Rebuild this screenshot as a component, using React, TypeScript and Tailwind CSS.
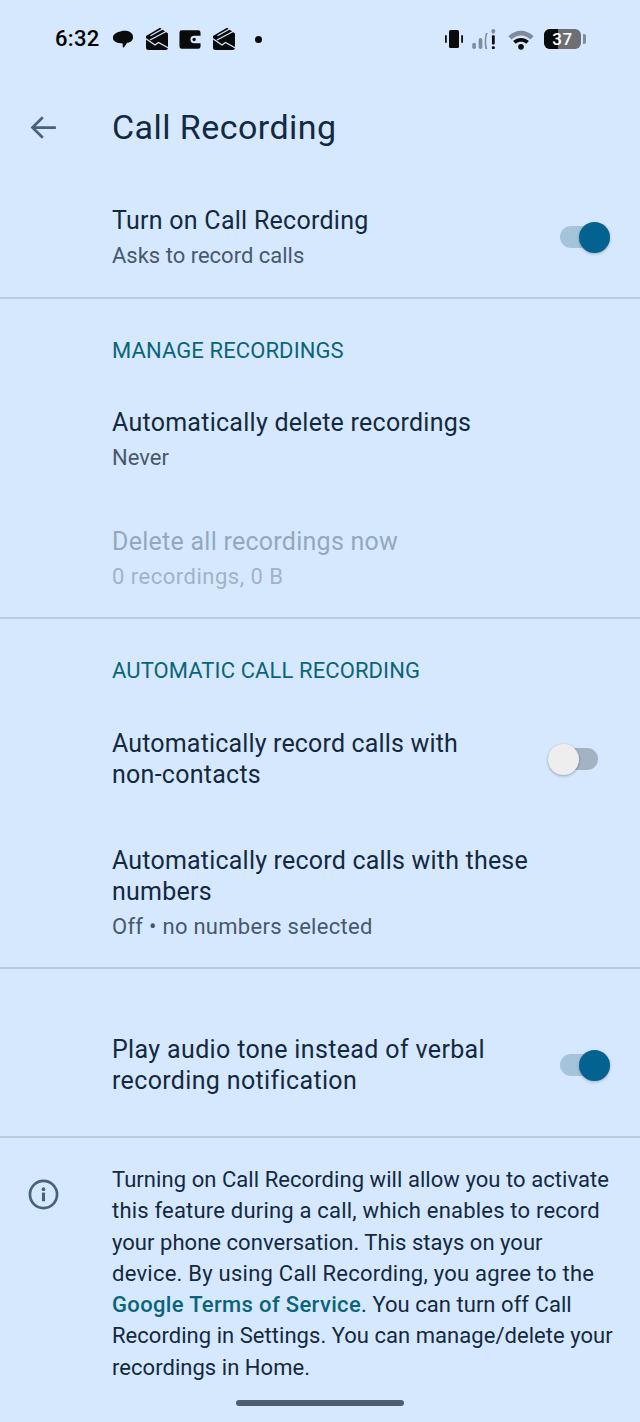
import React from "react";

const F = "font-['Roboto',sans-serif]";

function Folder({ className = "" }: { className?: string }) {
  return (
    <svg viewBox="0 0 24 24" className={className} fill="#0b0b0c">
      <path d="M1 9 15 .8 23 6.500V20.500a2.500 2.500 0 0 1-2.500 2.500h-17A2.500 2.500 0 0 1 1 20.500z" />
      <path d="M5.500 8.800 18.500 1.500M5 13 23 3.500M.5 11.500l9.500 6.500 3.500-2.500 10 5.500" stroke="#d6e8fe" strokeWidth="1.300" fill="none" />
    </svg>
  );
}

function Switch({ on }: { on: boolean }) {
  if (on) {
    return (
      <div className="relative w-[50px] h-[22px] rounded-full bg-[#a5c4dc] shrink-0">
        <div className="absolute right-0 top-[-4px] w-[31px] h-[31px] rounded-full bg-[#03628f] shadow-[0_1px_3px_rgba(0,0,0,0.25)]" />
      </div>
    );
  }
  return (
    <div className="relative w-[50px] h-[22px] rounded-full bg-[#a3b3c2] shrink-0">
      <div className="absolute left-0 top-[-4px] w-[31px] h-[31px] rounded-full bg-[#eeeeee] shadow-[0_1px_3px_rgba(0,0,0,0.3)]" />
    </div>
  );
}

function Row({ title, sub, subClass = "", disabled, className = "", children }: { title: React.ReactNode; sub?: string; subClass?: string; disabled?: boolean; className?: string; children?: React.ReactNode }) {
  return (
    <div className={`flex items-center pl-[112px] ${className}`}>
      <div className="flex-1 min-w-0">
        <div className={`text-[25px] leading-[31px] tracking-[0.26px] ${disabled ? "text-[#93a8bd]" : "text-[#13293f]"}`}>{title}</div>
        {sub && <div className={`text-[22px] leading-[28px] mt-[6px] ${subClass} ${disabled ? "text-[#a0b3c7]" : "text-[#46596d]"}`}>{sub}</div>}
      </div>
      {children}
    </div>
  );
}

const Divider = () => <div className="h-[2px] bg-[#bccbdb] shrink-0" />;

const Section = ({ children }: { children: React.ReactNode }) => (
  <div className="pl-[112px] text-[22px] leading-[28px] tracking-[0.1px] text-[#0b6478]">{children}</div>
);

export default function App() {
  return (
    <div className={`${F} w-[640px] h-[1422px] bg-[#d6e8fe] overflow-hidden flex flex-col relative`}>
      {/* status bar */}
      <div className="h-[78px] flex items-center pl-[55px] pr-[54px] text-black shrink-0">
        <span className="text-[22px] font-medium leading-none w-[57px] tracking-[0.3px]">6:32</span>
        <div className="flex items-center gap-[11px] ml-[0px]">
          <svg viewBox="0 0 24 24" className="w-[22px] h-[22px]" fill="#0b0b0c">
            <path d="M10 3.500c5.500-1.300 13 .5 13 6.500 0 4-3.500 5.700-6.500 6.200L13.200 21c-.8.800-1.500.3-1.500-.5v-3.700C6 16.500 1 15 1 10.500 1 6.500 5.500 4.500 10 3.500z" />
          </svg>
          <Folder className="w-[24px] h-[24px]" />
          <svg viewBox="0 0 24 20" className="w-[22px] h-[19px] ml-[-1px]" fill="#0b0b0c">
            <path fillRule="evenodd" d="M3 0h18a2.500 2.500 0 0 1 2.500 2.500V6h-7a4 4 0 0 0 0 8h7v3.500A2.500 2.500 0 0 1 21 20H3a2.500 2.500 0 0 1-2.500-2.500v-15A2.500 2.500 0 0 1 3 0z" />
            <circle cx="16.500" cy="10" r="1.800" />
          </svg>
          <Folder className="w-[24px] h-[24px]" />
        </div>
        <span className="ml-[19px] w-[7px] h-[7px] rounded-full bg-[#0b0b0c]" />
        <div className="ml-auto flex items-center">
          <svg viewBox="0 0 20 20" className="w-[20px] h-[20px]" fill="#0b0b0c">
            <rect x="5" y="1" width="10" height="18" rx="1.500" />
            <rect x="1" y="6" width="1.800" height="8" rx=".9" />
            <rect x="17.200" y="6" width="1.800" height="8" rx=".9" />
          </svg>
          <svg viewBox="0 0 32 24" className="w-[30px] h-[22px] ml-[7px]">
            <g fill="#7f8c9c">
              <rect x="1" y="16" width="4" height="7" rx="2" />
              <rect x="8" y="11" width="4" height="12" rx="2" />
              <path d="M18 5.500c-2 3-2.500 12-.5 17.500h-2c-1.500-6-1-14 .5-17.500z" />
              <rect x="22" y="1" width="4" height="5" rx="2" />
            </g>
            <rect x="22.500" y="8" width="3" height="10" rx="1" fill="#0b0b0c" />
            <rect x="22.500" y="20" width="3" height="3" rx="1" fill="#0b0b0c" />
          </svg>
          <svg viewBox="0 0 26 20" className="w-[28px] h-[21px] ml-[6px]">
            <path d="M1 7c7-7 17-7 24 0l-3 3c-5.500-5-12.500-5-18 0z" fill="#7f8c9c" />
            <path d="M5.500 11.500c4.500-4 10.500-4 15 0l-2.500 2.500c-3-2.500-7-2.500-10 0z" fill="#0b0b0c" />
            <circle cx="13" cy="17" r="2.700" fill="#0b0b0c" />
          </svg>
          <div className="relative ml-[9px] w-[37px] h-[20px] rounded-[6px] bg-[#6d6f73] overflow-hidden flex items-center justify-center">
            <div className="absolute left-0 top-0 bottom-0 w-[14px] bg-[#0b0b0c]" />
            <span className="relative text-white text-[17px] font-medium leading-none tracking-[0.5px]">37</span>
          </div>
          <div className="w-[3px] h-[10px] rounded-r-[2px] bg-[#7f8c9c] ml-[2px]" />
        </div>
      </div>

      {/* toolbar */}
      <div className="h-[99px] pb-[2px] flex items-center shrink-0">
        <svg viewBox="0 0 24 24" className="ml-[27px] w-[33px] h-[33px] mt-[2px]" fill="none" stroke="#4a6278" strokeWidth="2">
          <path d="M21 12H4M11.500 4.500 4 12l7.500 7.500" />
        </svg>
        <h1 className="ml-[52px] text-[34px] leading-[40px] font-normal text-[#13293f] tracking-[0.45px]">Call Recording</h1>
      </div>

      <Row title="Turn on Call Recording" sub="Asks to record calls" className="pr-[30px] h-[120px] shrink-0">
        <Switch on />
      </Row>
      <Divider />

      <div className="pt-[38px] shrink-0"><Section>MANAGE RECORDINGS</Section></div>
      <Row title="Automatically delete recordings" sub="Never" className="pt-[42px] pr-[30px] shrink-0" />
      <Row title="Delete all recordings now" sub="0 recordings, 0 B" subClass="tracking-[0.5px]" disabled className="pt-[54px] pr-[30px] shrink-0" />
      <div className="h-[26px] shrink-0" />
      <Divider />

      <div className="pt-[38px] shrink-0"><Section>AUTOMATIC CALL RECORDING</Section></div>
      <Row title={<><span className="tracking-[0.16px]">Automatically record calls with</span><br />non-contacts</>} className="pt-[43px] pr-[42px] shrink-0">
        <Switch on={false} />
      </Row>
      <Row title={<><span className="tracking-[0.2px]">Automatically record calls with these</span><br />numbers</>} sub="Off • no numbers selected" subClass="tracking-[0.28px]" className="pt-[55px] pr-[30px] shrink-0" />
      <div className="h-[26px] shrink-0" />
      <Divider />

      <Row title={<><span className="tracking-[0.35px]">Play audio tone instead of verbal</span><br /><span className="tracking-[0.35px]">recording notification</span></>} className="pt-[65px] pr-[30px] shrink-0">
        <Switch on />
      </Row>
      <div className="h-[40px] shrink-0" />
      <Divider />

      <div className="flex pt-[26px] shrink-0">
        <svg viewBox="0 0 32 32" className="ml-[28px] mt-[15px] w-[31px] h-[31px] shrink-0" fill="none">
          <circle cx="16" cy="16" r="14" stroke="#4a6278" strokeWidth="2.800" />
          <rect x="14.400" y="14" width="3.200" height="9" fill="#4a6278" />
          <circle cx="16" cy="10.500" r="1.900" fill="#4a6278" />
        </svg>
        <p className="ml-[53px] text-[22px] tracking-[0.04px] leading-[31.300px] text-[#13293f] whitespace-nowrap">
          <span className="tracking-[0.06px]">Turning on Call Recording will allow you to activate</span><br />
          <span className="tracking-[0.2px]">this feature during a call, which enables to record</span><br />
          your phone conversation. This stays on your<br />
          <span className="tracking-[0.24px]">device. By using Call Recording, you agree to the</span><br />
          <span className="text-[#0b6478] font-medium tracking-[0.34px]">Google Terms of Service</span>. You can turn off Call<br />
          Recording in Settings. You can manage/delete your<br />
          recordings in Home.
        </p>
      </div>

      <div className="absolute left-[236px] top-[1400px] w-[168px] h-[6px] rounded-full bg-[#4f5e6c]" />
    </div>
  );
}
